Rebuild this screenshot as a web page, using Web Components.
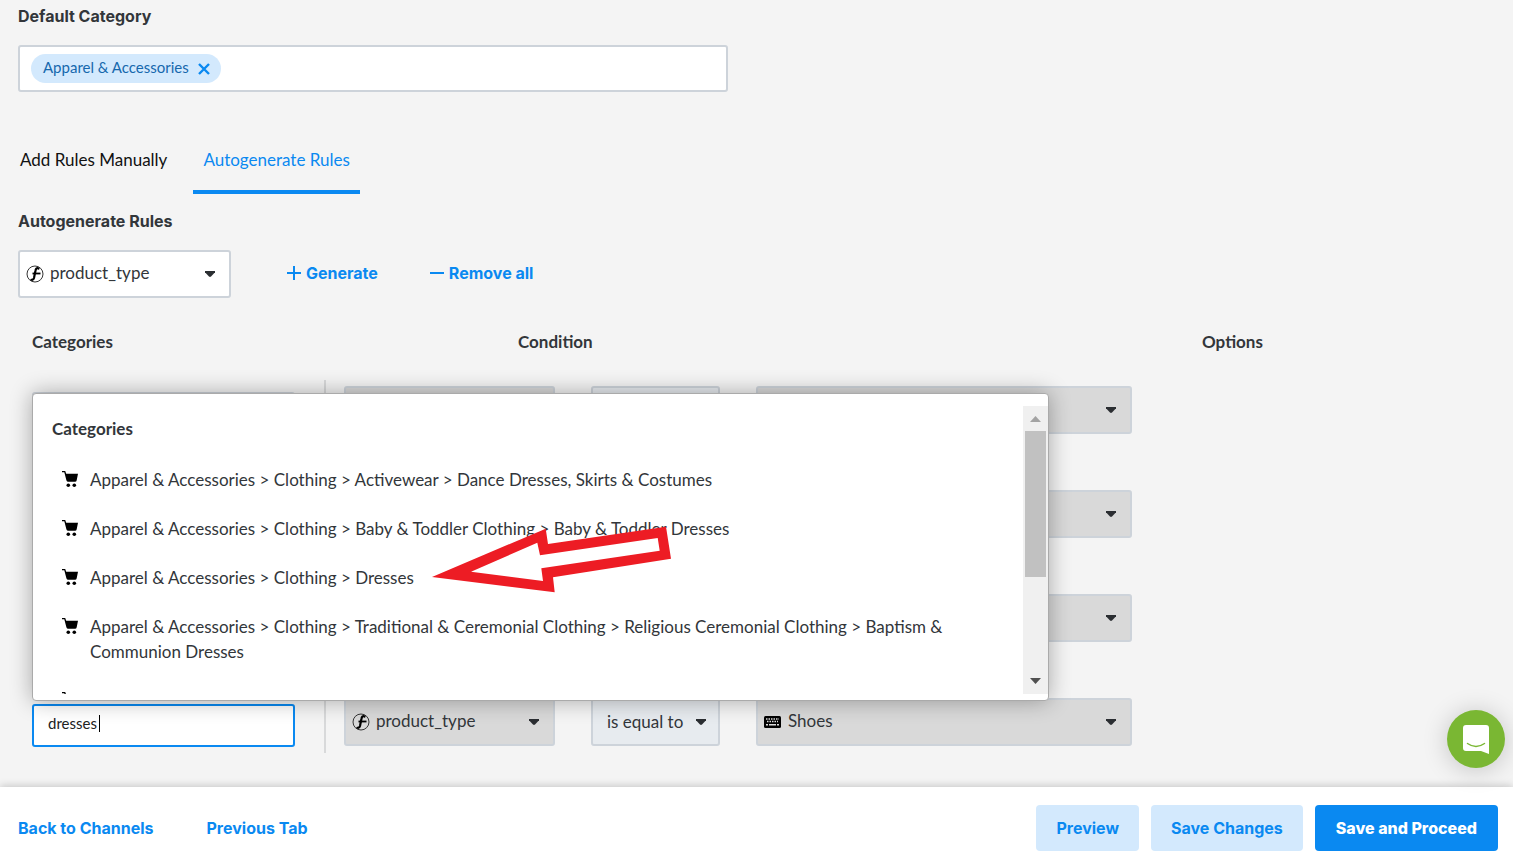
<!DOCTYPE html>
<html lang="en">
<head>
<meta charset="utf-8">
<title>Category rules</title>
<style>
  html, body {
    margin: 0;
    height: 100%;
  }
  body {
    --blue: #0a89f1;
    --pale: #d3e9fd;
    --line: #cdd3da;
    --ink: #32363a;
    --body-font: "Lato", sans-serif;
    --head-font: "Inter", sans-serif;
    font-family: var(--body-font);
    font-size: 17px;
    line-height: 24px;
    color: var(--ink);
    background: #f4f4f4;
    overflow: hidden;
  }
</style>
</head>
<body>
<rules-app></rules-app>

<script>
function define(name, html, setup) {
  const template = document.createElement('template');
  template.innerHTML = html;
  customElements.define(name, class extends HTMLElement {
    constructor() {
      super();
      this.root = this.attachShadow({ mode: 'open' });
      this.root.appendChild(template.content.cloneNode(true));
    }
    connectedCallback() {
      if (setup) setup(this, this.root);
    }
  });
}

const ICONS = {
  cart: '<svg width="16" height="17" viewBox="0 0 16 17"><path d="M0 0h3.200l1 2.800H16l-1.300 6.500q-.3 1.500-1.700 1.500H6.200q-1.400 0-1.800-1.500L2.300 1.300H0z"/><circle cx="6.300" cy="14.300" r="1.800"/><circle cx="12.300" cy="14.300" r="1.800"/></svg>',
  func: '<svg width="18" height="18" viewBox="0 0 18 18"><circle cx="9" cy="9" r="8" fill="none" stroke="#333" stroke-width="1"/><path d="M12.500 3.500C11 2.600 9.800 3.500 9.400 6L8 13Q7.400 15.300 5.400 14.800" fill="none" stroke="#000" stroke-width="2.200" stroke-linecap="round"/><path d="M6.500 8.500h8" stroke="#000" stroke-width="1.800"/></svg>',
  keyboard: '<svg width="17" height="12" viewBox="0 0 17 12"><rect width="17" height="12" rx="1.500"/><path d="M2 3h13M3 5.500h11" stroke="#ddd" stroke-width="1.500" stroke-dasharray="1.500 1"/><path d="M2 8.700h2M5 8.700h7M13 8.700h2" stroke="#ddd" stroke-width="1.500"/></svg>',
  plus: '<svg width="14" height="14" viewBox="0 0 14 14"><path d="M0 7h14M7 0v14" stroke="#0a89f1" stroke-width="2"/></svg>',
  minus: '<svg width="14" height="14" viewBox="0 0 14 14"><path d="M0 7h14" stroke="#0a89f1" stroke-width="2"/></svg>',
  close: '<svg width="12" height="12" viewBox="0 0 12 12"><path d="M1 1l10 10M11 1L1 11" stroke="#0a89f1" stroke-width="2.400"/></svg>',
  caret: '<svg width="12" height="8" viewBox="0 0 12 8"><path d="M1 1h10v1.200L7 6.500q-1 .8-2 0L1 2.200z" fill="#2b2e32"/></svg>'
};

define('ui-icon', `
<style>
  :host { display: inline-flex; flex: none; }
  svg { display: block; }
</style>
<span></span>`, (el, root) => {
  root.querySelector('span').innerHTML = ICONS[el.getAttribute('name')] || '';
});

define('tag-field', `
<style>
  :host { display: block; width: 48%; }
  label {
    display: block;
    font: 700 16px/24px var(--head-font);
  }
  .box {
    display: flex;
    align-items: center;
    box-sizing: border-box;
    height: 47px;
    margin-top: 17px;
    padding: 0 11px;
    background: #fff;
    border: 2px solid var(--line);
    border-radius: 3px;
  }
  .tag {
    display: flex;
    align-items: center;
    gap: 9px;
    height: 29px;
    padding: 0 11px 0 12px;
    border-radius: 15px;
    background: var(--pale);
    color: #1668ad;
    font-size: 15px;
    white-space: nowrap;
  }
  .text { padding-bottom: 3px; }
  button { display: flex; padding: 0; border: 0; background: none; }
  input { flex: 1; min-width: 0; border: 0; outline: 0; background: none; }
</style>
<label for="cat">Default Category</label>
<div class="box">
  <span class="tag"><span class="text"><slot></slot></span><button aria-label="Remove"><ui-icon name="close"></ui-icon></button></span>
  <input id="cat">
</div>`);

define('tab-bar', `
<style>
  :host { display: flex; gap: 16px; margin-left: -8px; }
  button {
    height: 50px;
    padding: 0 10px 14px;
    border: 0;
    border-bottom: 4px solid transparent;
    background: none;
    color: #111;
    font: 17px/24px var(--body-font);
  }
  .on { color: var(--blue); border-color: var(--blue); }
</style>
<button>Add Rules Manually</button>
<button class="on">Autogenerate Rules</button>`);

define('drop-down', `
<style>
  :host { display: block; position: relative; }
  select {
    appearance: none;
    display: block;
    box-sizing: border-box;
    width: 100%;
    height: 48px;
    margin: 0;
    padding: 0 30px 2px;
    border: 2px solid var(--line);
    border-radius: 3px;
    background: var(--fill, #fff);
    color: var(--ink);
    font: 17px/24px var(--body-font);
  }
  :host(:not([icon])) select { padding: 0 14px; }
  ui-icon { position: absolute; top: 50%; transform: translateY(-50%); pointer-events: none; }
  .left { left: 8px; }
  .right { right: 15px; }
  :host([slot="operator"]) .right { right: 13px; }
</style>
<select><option></option></select>
<ui-icon class="right" name="caret"></ui-icon>`, (el, root) => {
  root.querySelector('select').setAttribute('aria-label', el.getAttribute('label'));
  root.querySelector('option').textContent = el.getAttribute('value') || '';
  if (el.hasAttribute('icon')) {
    const icon = document.createElement('ui-icon');
    icon.className = 'left';
    icon.setAttribute('name', el.getAttribute('icon'));
    root.appendChild(icon);
  }
});

define('text-action', `
<style>
  :host { display: block; }
  button {
    display: flex;
    align-items: center;
    gap: 5px;
    padding: 0 0 2px;
    border: 0;
    background: none;
    color: var(--blue);
    font: 700 16px/24px var(--head-font);
    white-space: nowrap;
  }
</style>
<button><slot name="icon"></slot><slot></slot></button>`);

define('rule-row', `
<style>
  :host {
    display: grid;
    grid-template-columns: minmax(0, 292fr) minmax(0, 808fr) minmax(0, 366fr);
    height: 61px;
  }
  .category {
    position: relative;
    display: flex;
    align-items: flex-end;
    padding: 0 29px 6px 0;
  }
  input {
    box-sizing: border-box;
    width: 100%;
    height: 43px;
    padding: 0 14px 5px;
    border: 2px solid var(--line);
    border-radius: 3px;
    outline: 0;
    background: #fff;
    color: #222;
    caret-color: transparent;
    font: 15px/24px var(--body-font);
  }
  .cursor { display: none; }
  :host([active]) input { border-color: var(--blue); }
  :host([active]) .cursor {
    display: block;
    position: absolute;
    left: 67px;
    bottom: 21px;
    width: 1px;
    height: 17px;
    background: #000;
  }
  .condition {
    display: grid;
    grid-template-columns: 211fr 129fr 376fr;
    gap: 36px;
    align-items: end;
    padding: 0 0 7px 18px;
    border-left: 2px solid #d8d9da;
  }
  ::slotted(drop-down) { --fill: #d9d9d9; }
  ::slotted([slot="operator"]) { --fill: #e7ebef; }
</style>
<div class="category"><input aria-label="Category"><i class="cursor"></i></div>
<div class="condition">
  <slot name="field"></slot>
  <slot name="operator"></slot>
  <slot name="value"></slot>
</div>`, (el, root) => {
  root.querySelector('input').value = el.getAttribute('category') || '';
});

define('menu-item', `
<style>
  :host { display: flex; gap: 12px; padding: 0 60px 24px 29px; line-height: 25px; }
  ui-icon { margin-top: 4px; align-self: flex-start; }
</style>
<ui-icon name="cart"></ui-icon>
<span><slot></slot></span>`);

// Suggestion list opened above the active category box
define('category-menu', `
<style>
  :host {
    display: flex;
    box-sizing: border-box;
    height: 308px;
    padding: 12px 0 6px;
    background: #fff;
    border: 1px solid #aaa;
    border-radius: 4px;
    box-shadow: 0 0 22px rgba(0, 0, 0, .32);
  }
  .list { flex: 1; min-width: 0; overflow: hidden; }
  h3 { margin: 11px 0 26px 19px; font: 700 17px/24px var(--body-font); }
  .bar {
    display: flex;
    flex-direction: column;
    align-items: center;
    width: 25px;
    background: #f0f0f0;
  }
  .bar svg { flex: none; }
  .thumb { width: 21px; height: 146px; margin-bottom: auto; background: #c1c1c1; }
  .arrow { position: absolute; left: 399px; top: 132px; }
</style>
<div class="list">
  <h3>Categories</h3>
  <slot></slot>
</div>
<div class="bar">
  <svg width="25" height="25"><path d="M7 16h11l-5.500-6z" fill="#a3a3a3"/></svg>
  <div class="thumb"></div>
  <svg width="25" height="25"><path d="M7 9h11l-5.500 6z" fill="#505050"/></svg>
</div>
<svg class="arrow" width="240" height="67" viewBox="0 0 240 67">
  <path fill="#ed1c24" fill-rule="evenodd" d="M0 51L113.700 2.700 116 18 234 .700 239 32.700 121 51.300 122.700 66.300zM39 45.700L111 55 109.300 42.300 227.700 24.700 225.700 12 108 29.300 105.300 16.700z"/>
</svg>`);

define('chat-button', `
<style>
  :host { position: fixed; right: 8px; bottom: 91px; }
  button {
    display: flex;
    align-items: center;
    justify-content: center;
    width: 58px;
    height: 58px;
    padding: 0;
    border: 0;
    border-radius: 50%;
    background: #7ab733;
    box-shadow: 0 2px 26px rgba(0, 0, 0, .2);
  }
</style>
<button aria-label="Chat">
  <svg width="28" height="30" viewBox="0 0 28 30"><path d="M4 1h20a3 3 0 0 1 3 3v26l-8-3H4a3 3 0 0 1-3-3V4a3 3 0 0 1 3-3z" fill="#fff"/><path d="M5.500 19.500q8.500 6 17 0" fill="none" stroke="#7ab733" stroke-width="1.500" stroke-linecap="round"/></svg>
</button>`);

define('page-footer', `
<style>
  :host {
    display: flex;
    align-items: center;
    box-sizing: border-box;
    height: 72px;
    padding: 10px 15px 0 18px;
    background: #fff;
    box-shadow: 0 -1px 8px rgba(0, 0, 0, .2);
    font: 700 16px/24px var(--head-font);
  }
  a { margin-right: 53px; color: var(--blue); text-decoration: none; }
  div { display: flex; gap: 12px; margin-left: auto; }
  button {
    height: 46px;
    padding: 0 20px;
    border: 0;
    border-radius: 4px;
    background: var(--pale);
    color: var(--blue);
    font: inherit;
  }
  .primary { padding: 0 21px; background: var(--blue); color: #fff; font-weight: 800; }
</style>
<a href="#channels">Back to Channels</a>
<a href="#previous">Previous Tab</a>
<div>
  <button>Preview</button>
  <button>Save Changes</button>
  <button class="primary">Save and Proceed</button>
</div>`);

define('rules-app', `
<style>
  :host { display: flex; flex-direction: column; height: 100%; }
  main { flex: 1; min-height: 0; padding: 4px 15px 0 18px; }
  tab-bar { margin-top: 52px; }
  h2 { margin: 15px 0 17px; font: 700 16px/24px var(--head-font); }
  .tools { display: flex; align-items: center; }
  .tools drop-down { width: 213px; margin-right: 56px; }
  .tools text-action { margin-right: 52px; }
  .heads {
    display: grid;
    grid-template-columns: 486fr 684fr 296fr;
    margin-top: 32px;
    padding-left: 14px;
    font-weight: 700;
  }
  .rules {
    position: relative;
    display: grid;
    gap: 43px;
    margin: 26px 0 0 14px;
  }
  category-menu { position: absolute; left: 0; bottom: 52px; width: 69.4%; }
</style>
<main>
  <tag-field>Apparel &amp; Accessories</tag-field>
  <tab-bar></tab-bar>
  <h2>Autogenerate Rules</h2>
  <div class="tools">
    <drop-down label="Attribute" icon="func" value="product_type"></drop-down>
    <text-action><ui-icon slot="icon" name="plus"></ui-icon>Generate</text-action>
    <text-action><ui-icon slot="icon" name="minus"></ui-icon>Remove all</text-action>
  </div>
  <div class="heads"><span>Categories</span><span>Condition</span><span>Options</span></div>
  <div class="rules">
    <rule-row>
      <drop-down slot="field" label="Field"></drop-down>
      <drop-down slot="operator" label="Operator"></drop-down>
      <drop-down slot="value" label="Value"></drop-down>
    </rule-row>
    <rule-row>
      <drop-down slot="field" label="Field"></drop-down>
      <drop-down slot="operator" label="Operator"></drop-down>
      <drop-down slot="value" label="Value"></drop-down>
    </rule-row>
    <rule-row>
      <drop-down slot="field" label="Field"></drop-down>
      <drop-down slot="operator" label="Operator"></drop-down>
      <drop-down slot="value" label="Value"></drop-down>
    </rule-row>
    <rule-row active category="dresses">
      <drop-down slot="field" label="Field" icon="func" value="product_type"></drop-down>
      <drop-down slot="operator" label="Operator" value="is equal to"></drop-down>
      <drop-down slot="value" label="Value" icon="keyboard" value="Shoes"></drop-down>
    </rule-row>
    <category-menu>
      <menu-item>Apparel &amp; Accessories &gt; Clothing &gt; Activewear &gt; Dance Dresses, Skirts &amp; Costumes</menu-item>
      <menu-item>Apparel &amp; Accessories &gt; Clothing &gt; Baby &amp; Toddler Clothing &gt; Baby &amp; Toddler Dresses</menu-item>
      <menu-item>Apparel &amp; Accessories &gt; Clothing &gt; Dresses</menu-item>
      <menu-item>Apparel &amp; Accessories &gt; Clothing &gt; Traditional &amp; Ceremonial Clothing &gt; Religious Ceremonial Clothing &gt; Baptism &amp; Communion Dresses</menu-item>
      <menu-item></menu-item>
    </category-menu>
  </div>
</main>
<page-footer></page-footer>
<chat-button></chat-button>`);
</script>
</body>
</html>
